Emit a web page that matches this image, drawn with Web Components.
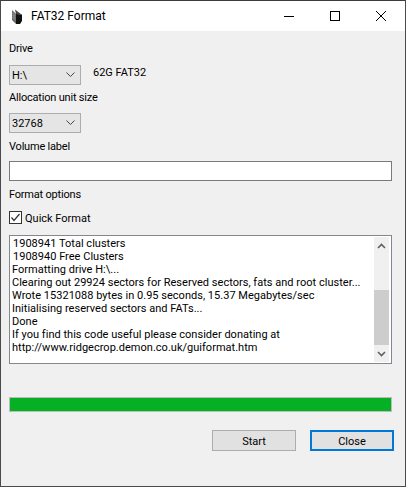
<!DOCTYPE html>
<html>
<head>
<meta charset="utf-8">
<title>FAT32 Format</title>
<style>
  html, body { margin: 0; height: 100%; background: #f0f0f0; }
  body { font: 11px/16px Roboto, "Liberation Sans", sans-serif; color: #000; }
</style>
</head>
<body>
<fat-window>
  <span slot="title">FAT32 Format</span>
  <form-label style="margin-top:9px">Drive</form-label>
  <div style="display:flex;margin-top:9px;height:20px">
    <drop-down>H:\</drop-down>
    <span style="margin-left:12px;height:16px">62G FAT32</span>
  </div>
  <form-label style="margin-top:4px">Allocation unit size</form-label>
  <drop-down style="margin-top:8px">32768</drop-down>
  <form-label style="margin-top:5px">Volume label</form-label>
  <text-box style="margin-top:7px"></text-box>
  <form-label style="margin-top:5px">Format options</form-label>
  <check-box style="margin-top:9px">Quick Format</check-box>
  <log-view style="margin-top:11px">
    <div style="padding-left:1px">1908941 Total clusters</div>
    <div style="padding-left:1px">1908940 Free Clusters</div>
    <div>Formatting drive H:\...</div>
    <div>Clearing out 29924 sectors for Reserved sectors, fats and root cluster...</div>
    <div>Wrote 15321088 bytes in 0.95 seconds, 15.37 Megabytes/sec</div>
    <div>Initialising reserved sectors and FATs...</div>
    <div>Done</div>
    <div>If you find this code useful please consider donating at</div>
    <div>http://www.ridgecrop.demon.co.uk/guiformat.htm</div>
  </log-view>
  <progress-bar style="margin-top:33px"></progress-bar>
  <div style="display:flex;margin-top:18px;justify-content:flex-end;gap:14px;width:385px">
    <push-button>Start</push-button>
    <push-button focused>Close</push-button>
  </div>
</fat-window>
<script>
function shadow(el, html) {
  const template = document.createElement('template')
  template.innerHTML = html
  el.attachShadow({ mode: 'open' }).appendChild(template.content.cloneNode(true))
}

class FatWindow extends HTMLElement {
  constructor() {
    super()
    shadow(this, `
      <style>
        :host {
          display: flex;
          flex-direction: column;
          box-sizing: border-box;
          width: 406px;
          height: 487px;
          border: 1px solid #4a4a4a;
          border-top-color: #3c3c3c;
          background: #f0f0f0;
          overflow: hidden;
        }
        .bar {
          display: flex;
          align-items: center;
          height: 30px;
          background: #fff;
          flex: none;
        }
        .icon { margin-left: 11px; width: 10px; height: 15px; flex: none; }
        .title { margin-left: 9px; flex: 1; font-size: 12px; }
        .ctl { width: 46px; height: 30px; display: flex; align-items: center; justify-content: center; flex: none; }
        .body { display: flex; flex-direction: column; padding-left: 8px; flex: 1; }
      </style>
      <div class="bar">
        <svg class="icon" viewBox="0 0 10 15">
          <path d="M0 1 L4 5 L4 15 L0 11 Z" fill="#6a6a6a"/>
          <path d="M3 0.5 L9.5 5.5 L4 5 Z" fill="#444"/>
          <path d="M4 5 L10 5.5 L10 12 L8 15 L4 15 Z" fill="#111"/>
          <path d="M.5 4L3.5 7M.5 6L3.5 9M.5 8L3.5 11" stroke="#b5b5b5" stroke-width=".6"/>
        </svg>
        <span class="title"><slot name="title"></slot></span>
        <span class="ctl"><svg width="10" height="10" viewBox="0 0 10 10"><path d="M0 5.5H10" stroke="#000" fill="none"/></svg></span>
        <span class="ctl"><svg width="10" height="10" viewBox="0 0 10 10"><rect x=".5" y=".5" width="9" height="9" stroke="#000" fill="none"/></svg></span>
        <span class="ctl" style="margin-right:1px"><svg width="10" height="10" viewBox="0 0 10 10"><path d="M0 0L10 10M10 0L0 10" stroke="#000" fill="none"/></svg></span>
      </div>
      <div class="body"><slot></slot></div>
    `)
  }
}
customElements.define('fat-window', FatWindow)

class FormLabel extends HTMLElement {
  constructor() {
    super()
    shadow(this, `<style>:host { display: block; height: 16px; line-height: 18px; letter-spacing: -.2px; }</style><slot></slot>`)
  }
}
customElements.define('form-label', FormLabel)

class DropDown extends HTMLElement {
  constructor() {
    super()
    shadow(this, `
      <style>
        :host {
          display: flex;
          align-items: center;
          box-sizing: border-box;
          width: 72px;
          height: 20px;
          flex: none;
          border: 1px solid #adadad;
          background: #e5e5e5;
          padding-left: 2px;
        }
        span { flex: 1; padding-top: 2px; }
        svg { margin-right: 5px; }
      </style>
      <span><slot></slot></span>
      <svg width="9" height="6" viewBox="0 0 9 6"><path d="M.5 .5L4.5 4.5L8.5 .5" stroke="#444" fill="none"/></svg>
    `)
  }
}
customElements.define('drop-down', DropDown)

class TextBox extends HTMLElement {
  constructor() {
    super()
    shadow(this, `
      <style>
        :host {
          display: block;
          box-sizing: border-box;
          width: 383px;
          height: 20px;
          border: 1px solid #7a7a7a;
          background: #fff;
        }
      </style>
    `)
  }
}
customElements.define('text-box', TextBox)

class CheckBox extends HTMLElement {
  constructor() {
    super()
    shadow(this, `
      <style>
        :host { display: flex; align-items: center; height: 13px; gap: 3px; }
        svg { flex: none; }
        span { padding-top: 2px; }
      </style>
      <svg width="13" height="13" viewBox="0 0 13 13">
        <rect x=".5" y=".5" width="12" height="12" fill="#fff" stroke="#333"/>
        <path d="M2.5 6.5L5 9.5L10.5 3" fill="none" stroke="#333" stroke-width="1.2"/>
      </svg>
      <span><slot></slot></span>
    `)
  }
}
customElements.define('check-box', CheckBox)

class LogView extends HTMLElement {
  constructor() {
    super()
    shadow(this, `
      <style>
        :host {
          display: flex;
          box-sizing: border-box;
          width: 383px;
          height: 129px;
          border: 1px solid #828790;
          background: #fff;
          flex: none;
        }
        .text { flex: 1; padding: 1px 0 0 2px; line-height: 13px; letter-spacing: .02px; white-space: nowrap; overflow: hidden; }
        .scroll {
          width: 15px;
          margin: 1px 2px 1px 0;
          background: #f0f0f0;
          display: flex;
          flex-direction: column;
          flex: none;
        }
        .arrow { height: 17px; display: flex; align-items: center; justify-content: center; flex: none; }
        .track { flex: 1; display: flex; flex-direction: column; justify-content: flex-end; }
        .thumb { height: 55px; background: #cdcdcd; }
      </style>
      <div class="text"><slot></slot></div>
      <div class="scroll">
        <div class="arrow"><svg width="9" height="6" viewBox="0 0 9 6"><path d="M1 5L4.5 1.5L8 5" stroke="#606060" stroke-width="1.6" fill="none"/></svg></div>
        <div class="track"><div class="thumb"></div></div>
        <div class="arrow"><svg width="9" height="6" viewBox="0 0 9 6"><path d="M1 1L4.5 4.5L8 1" stroke="#606060" stroke-width="1.6" fill="none"/></svg></div>
      </div>
    `)
  }
}
customElements.define('log-view', LogView)

class ProgressBar extends HTMLElement {
  constructor() {
    super()
    shadow(this, `
      <style>
        :host {
          display: block;
          box-sizing: border-box;
          width: 383px;
          height: 15px;
          border: 1px solid #bcbcbc;
          background: #06b025;
        }
      </style>
    `)
  }
}
customElements.define('progress-bar', ProgressBar)

class PushButton extends HTMLElement {
  constructor() {
    super()
    shadow(this, `
      <style>
        :host {
          display: flex;
          align-items: center;
          justify-content: center;
          box-sizing: border-box;
          width: 84px;
          height: 21px;
          padding-top: 2px;
          border: 1px solid #adadad;
          background: #e1e1e1;
        }
        :host([focused]) { border: 2px solid #0078d7; }
      </style>
      <slot></slot>
    `)
  }
}
customElements.define('push-button', PushButton)
</script>
</body>
</html>
